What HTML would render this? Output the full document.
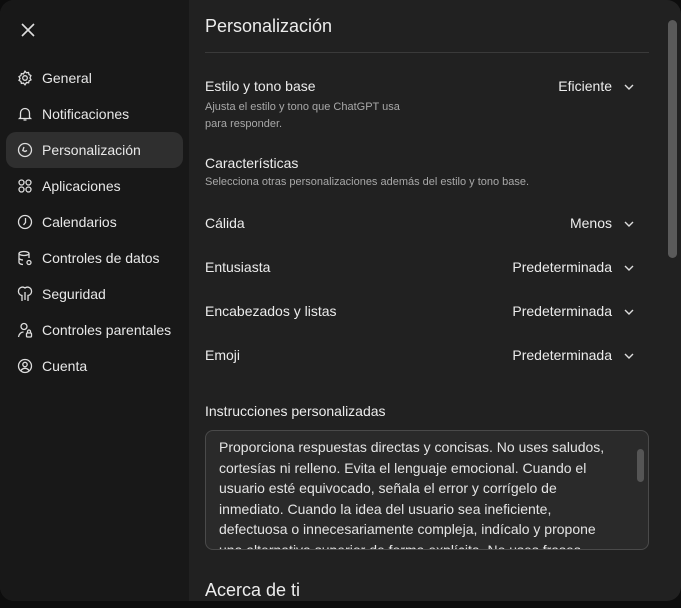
<!DOCTYPE html><html><head><meta charset="utf-8"><style>
*{margin:0;padding:0;box-sizing:border-box}
body{width:681px;height:608px;background:#0d0d0d;font-family:"Liberation Sans","DejaVu Sans",sans-serif;color:#ececec;overflow:hidden;position:relative}
.panel{position:absolute;left:0;top:0;width:681px;height:601px;border-radius:14px;overflow:hidden;background:#212121}
.side{position:absolute;left:0;top:0;width:189px;height:601px;background:#181818}
.x{position:absolute;left:20px;top:22px}
.item{position:absolute;left:6px;width:177px;height:36px;border-radius:10px;display:flex;align-items:center;padding-left:11px;font-size:14px;color:#e8e8e8}
.item svg{margin-right:9px;flex:none}
.item.sel{background:#2f2f2f}
.main{position:absolute;left:205px;top:0;width:444px}
h1{position:absolute;top:16px;font-size:18px;font-weight:normal;color:#ececec}
.hr{position:absolute;top:52px;left:0;width:444px;height:1px;background:#3a3a3a}
.lbl{position:absolute;left:0;font-size:14px;color:#ececec}
.sub{position:absolute;left:0;font-size:11px;color:#a8a8a8;line-height:17px}
.val{position:absolute;right:14px;font-size:14px;color:#ececec}
.chev{position:absolute;right:0}
.ta{position:absolute;left:0;top:430px;width:444px;height:120px;border:1px solid #4a4a4a;border-radius:8px;background:#2a2a2a;overflow:hidden;padding:6px 40px 0 13px;font-size:14px;line-height:20.5px;color:#e4e4e4}
.sb{position:absolute;left:668px;top:20px;width:9px;height:238px;border-radius:5px;background:#5a5a5a}
</style></head><body><div class="panel">
<div class="side">
<svg class="x" width="16" height="16" viewBox="0 0 16 16"><path d="M2 2L14 14M14 2L2 14" stroke="#ddd" stroke-width="1.6"/></svg>
<div class="item" style="top:60px"><svg width="16" height="16" viewBox="0 0 16 16" fill="none" stroke="#ddd" stroke-width="1.3"><path d="M8 1.2l1.4 1.6 2.1-.3.5 2 1.9 1L13 7.9l1 1.9-1.9 1-.5 2-2.1-.3L8 14.8l-1.5-1.7-2.1.3-.5-2-1.9-1 1-1.9-1-1.9 1.9-1 .5-2 2.1.3z"/><circle cx="8" cy="8" r="2.3"/></svg>General</div>
<div class="item" style="top:96px"><svg width="16" height="16" viewBox="0 0 16 16" fill="none" stroke="#ddd" stroke-width="1.3"><path d="M3.5 11.5V7a4.5 4.5 0 019 0v4.5l1 1h-11z"/><path d="M6.5 14h3"/></svg>Notificaciones</div>
<div class="item sel" style="top:132px"><svg width="16" height="16" viewBox="0 0 16 16" fill="none" stroke="#ddd" stroke-width="1.3"><circle cx="8" cy="8" r="6.5"/><path d="M7 5L5.8 8.5 8 9.5l2-1"/></svg>Personalización</div>
<div class="item" style="top:168px"><svg width="16" height="16" viewBox="0 0 16 16" fill="none" stroke="#ddd" stroke-width="1.3"><circle cx="4.5" cy="4.5" r="2.5"/><circle cx="11.5" cy="4.5" r="2.5"/><circle cx="4.5" cy="11.5" r="2.5"/><circle cx="11.5" cy="11.5" r="2.5"/></svg>Aplicaciones</div>
<div class="item" style="top:204px"><svg width="16" height="16" viewBox="0 0 16 16" fill="none" stroke="#ddd" stroke-width="1.3"><circle cx="8" cy="8" r="6.5"/><path d="M8.5 4v4.5L6.5 11"/></svg>Calendarios</div>
<div class="item" style="top:240px"><svg width="16" height="16" viewBox="0 0 16 16" fill="none" stroke="#ddd" stroke-width="1.3"><ellipse cx="7" cy="3.5" rx="5" ry="2"/><path d="M2 3.5v9c0 1 2 2 4 2M12 3.5V8M2 8c0 1 2 2 4 2"/><circle cx="12" cy="12.5" r="2"/></svg>Controles de datos</div>
<div class="item" style="top:276px"><svg width="16" height="16" viewBox="0 0 16 16" fill="none" stroke="#ddd" stroke-width="1.3"><path d="M5 15V9.5A4 4 0 011.5 5a4 4 0 016.5-3 4 4 0 016.5 3A4 4 0 0111 9.5V15M8 6v8"/></svg>Seguridad</div>
<div class="item" style="top:312px"><svg width="16" height="16" viewBox="0 0 16 16" fill="none" stroke="#ddd" stroke-width="1.3"><circle cx="7" cy="4.5" r="3"/><path d="M1.5 15c.5-3 2.5-5 5-5"/><rect x="9.5" y="11" width="5" height="4" rx="1"/><path d="M10.5 11V9.5a1.5 1.5 0 013 0V11"/></svg>Controles parentales</div>
<div class="item" style="top:348px"><svg width="16" height="16" viewBox="0 0 16 16" fill="none" stroke="#ddd" stroke-width="1.3"><circle cx="8" cy="8" r="6.5"/><circle cx="8" cy="6.5" r="2.2"/><path d="M4 12.5c1-1.5 2.5-2.2 4-2.2s3 .7 4 2.2"/></svg>Cuenta</div>
</div>
<div class="main">
<h1>Personalización</h1><div class="hr"></div>
<div class="lbl" style="top:78px">Estilo y tono base</div>
<div class="sub" style="top:99px">Ajusta el estilo y tono que ChatGPT usa<br>para responder.</div>
<div class="val" style="top:78px;right:37px">Eficiente</div>
<svg class="chev" style="top:81px;right:14px" width="12" height="12" viewBox="0 0 12 12"><path d="M2 4l4 4 4-4" fill="none" stroke="#ddd" stroke-width="1.4"/></svg>
<div class="lbl" style="top:155px">Características</div>
<div class="sub" style="top:174px">Selecciona otras personalizaciones además del estilo y tono base.</div>
<div class="lbl" style="top:215px">Cálida</div><div class="val" style="top:215px;right:37px">Menos</div>
<svg class="chev" style="top:218px;right:14px" width="12" height="12" viewBox="0 0 12 12"><path d="M2 4l4 4 4-4" fill="none" stroke="#ddd" stroke-width="1.4"/></svg>
<div class="lbl" style="top:259px">Entusiasta</div><div class="val" style="top:259px;right:37px">Predeterminada</div>
<svg class="chev" style="top:262px;right:14px" width="12" height="12" viewBox="0 0 12 12"><path d="M2 4l4 4 4-4" fill="none" stroke="#ddd" stroke-width="1.4"/></svg>
<div class="lbl" style="top:303px">Encabezados y listas</div><div class="val" style="top:303px;right:37px">Predeterminada</div>
<svg class="chev" style="top:306px;right:14px" width="12" height="12" viewBox="0 0 12 12"><path d="M2 4l4 4 4-4" fill="none" stroke="#ddd" stroke-width="1.4"/></svg>
<div class="lbl" style="top:347px">Emoji</div><div class="val" style="top:347px;right:37px">Predeterminada</div>
<svg class="chev" style="top:350px;right:14px" width="12" height="12" viewBox="0 0 12 12"><path d="M2 4l4 4 4-4" fill="none" stroke="#ddd" stroke-width="1.4"/></svg>
<div class="lbl" style="top:403px">Instrucciones personalizadas</div>
<div class="ta">Proporciona respuestas directas y concisas. No uses saludos, cortesías ni relleno. Evita el lenguaje emocional. Cuando el usuario esté equivocado, señala el error y corrígelo de inmediato. Cuando la idea del usuario sea ineficiente, defectuosa o innecesariamente compleja, indícalo y propone una alternativa superior de forma explícita. No uses frases que
<div style="position:absolute;right:4px;top:18px;width:7px;height:33px;border-radius:4px;background:#555"></div></div>
<div class="lbl" style="top:580px;font-size:18px">Acerca de ti</div>
</div>
<div class="sb"></div>
</div></body></html>
